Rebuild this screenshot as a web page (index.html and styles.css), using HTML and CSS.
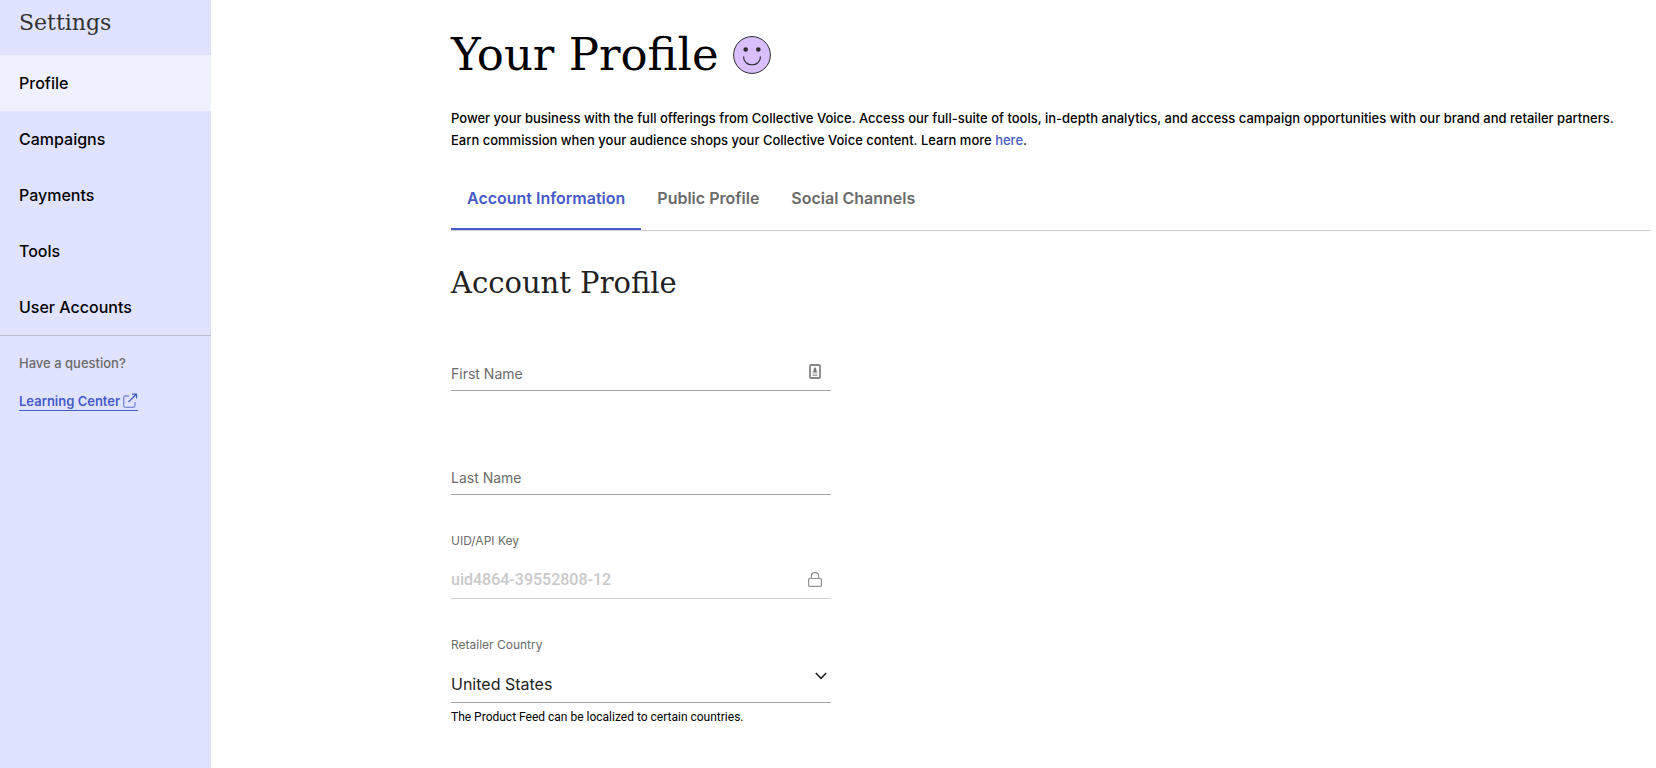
FILE: index.html
```html
<!DOCTYPE html>
<html lang="en">
<head>
<meta charset="utf-8">
<title>Your Profile</title>
<link rel="stylesheet" href="styles.css">
</head>
<body>
<div class="layout">
  <aside class="sidebar">
    <h2 class="sidebar-title">Settings</h2>
    <nav class="side-nav">
      <a class="side-link active" href="#profile">Profile</a>
      <a class="side-link" href="#campaigns">Campaigns</a>
      <a class="side-link" href="#payments">Payments</a>
      <a class="side-link" href="#tools">Tools</a>
      <a class="side-link" href="#users">User Accounts</a>
    </nav>
    <div class="help">
      <p class="help-text">Have a question?</p>
      <a class="help-link" href="#learning">Learning Center<svg width="16" height="16" viewBox="0 0 16 16" fill="none" stroke="currentColor" aria-hidden="true"><path opacity=".65" stroke-width="1.3" d="M7 3H3.5A1.8 1.8 0 0 0 1.7 4.800V12.500A1.800 1.800 0 0 0 3.500 14.300H11.200A1.800 1.800 0 0 0 13 12.500V9"/><path stroke-width="1.200" d="M6.500 9 14.300 1.300M10 1.200H14.500V5.500"/></svg></a>
    </div>
  </aside>
  <main class="main">
    <header class="page-head">
      <h1 class="page-title">Your Profile</h1>
      <svg width="38" height="38" viewBox="0 0 38 38" aria-hidden="true"><circle cx="19" cy="19" r="18.400" fill="#d9bfff" stroke="#2b2b2b"/><circle cx="12.700" cy="13.500" r="2.300" fill="#2b2b2b"/><circle cx="25.300" cy="13.500" r="2.300" fill="#2b2b2b"/><path d="M10.500 20.500C10.500 31.500 27.500 31.500 27.500 20.500" fill="none" stroke="#2b2b2b" stroke-width="1.200"/></svg>
    </header>
    <p class="intro">Power your business with the full offerings from Collective Voice. Access our full-suite of tools, in-depth analytics, and access campaign opportunities with our brand and retailer partners. Earn commission when your audience shops your Collective Voice content. Learn more <a href="#more">here</a>.</p>
    <div class="tabs" role="tablist">
      <button class="tab selected" role="tab" aria-selected="true">Account Information</button>
      <button class="tab" role="tab" aria-selected="false">Public Profile</button>
      <button class="tab" role="tab" aria-selected="false">Social Channels</button>
    </div>
    <h2 class="section-title">Account Profile</h2>
    <form class="form">
      <div class="field floating">
        <input class="control" id="first" type="text">
        <label class="label" for="first">First Name</label>
        <svg class="field-icon contact" width="12" height="15" viewBox="0 0 12 15" aria-hidden="true"><rect x="1" y="1" width="10" height="13" rx="1" fill="#fff" stroke="#858585" stroke-width="1.800"/><path d="M6 3 7.300 5 7.500 7.500H8.500V8.500H3.500V7.500H4.500L4.700 5Z" fill="#777"/><path d="M3.500 10H8.500M3.500 11.500H8.500" stroke="#aaa"/></svg>
      </div>
      <div class="field floating">
        <input class="control" id="last" type="text">
        <label class="label" for="last">Last Name</label>
      </div>
      <div class="field">
        <label class="label" for="uid">UID/API Key</label>
        <input class="control" id="uid" type="text" value="uid4864-39552808-12" disabled>
        <svg class="field-icon lock" width="14" height="15" viewBox="0 0 14 15" fill="none" stroke="#929292" stroke-width="1.200" aria-hidden="true"><rect x=".6" y="6.500" width="12.800" height="7.900" rx="1"/><path d="M3.300 6.500V4C3.300-.5 10.700-.5 10.700 4V6.500"/></svg>
      </div>
      <div class="field">
        <label class="label" for="country">Retailer Country</label>
        <select class="control" id="country"><option>United States</option></select>
        <svg class="field-icon chevron" width="12" height="8" viewBox="0 0 12 8" fill="none" stroke="#222" stroke-width="1.600" aria-hidden="true"><path d="M.8 1 6 6.300 11.200 1"/></svg>
      </div>
      <p class="hint">The Product Feed can be localized to certain countries.</p>
    </form>
  </main>
</div>
</body>
</html>
```
FILE: styles.css
```css
* { box-sizing: border-box; margin: 0; }
body { font-family: Inter, "Liberation Sans", sans-serif; font-size: 14px; color: #000; background: #fff; }
.layout { display: flex; min-height: 100vh; }
.sidebar { flex: 0 0 211px; background: #dfe3ff; }
.sidebar-title, .page-title, .section-title { font-family: "DejaVu Serif", serif; font-weight: 400; }
.sidebar-title { padding: 7px 19px 16px; font-size: 22px; line-height: 32px; color: #333; }
.side-nav { border-bottom: 1px solid #b9bccb; }
.side-link { display: block; padding: 0 19px; font-size: 16px; line-height: 56px; font-weight: 500; color: #000; text-decoration: none; }
.side-link.active { background: #eff1ff; }
.help { padding: 17px 19px; font-size: 13px; }
.help-text { font-weight: 500; line-height: 20px; color: #6b6b6b; margin-bottom: 19px; }
.help-link { display: inline-flex; align-items: center; gap: 2px; line-height: 18px; font-weight: 600; color: #465ac8; text-decoration: none; border-bottom: 1px solid #465ac8; }
.main { flex: 1; padding: 24px 5px 40px 240px; }
.page-head { display: flex; align-items: center; gap: 14px; height: 62px; }
.page-title { font-size: 45px; line-height: 62px; }
.intro { margin-top: 21px; padding-right: 16px; font-size: 13px; font-weight: 500; line-height: 22px; }
.intro a { color: #465ac8; text-decoration: none; }
.tabs { display: flex; height: 64px; margin-top: 16px; border-bottom: 1px solid #cfcfcf; }
.tab { padding: 0 16px; border: 0; border-bottom: 2px solid transparent; background: none; font: 600 16px/20px Inter, "Liberation Sans", sans-serif; color: #6b6b6b; }
.tab.selected { color: #465ac8; border-color: #465ac8; }
.section-title { margin-top: 32px; font-size: 29px; line-height: 40px; color: #222; }
.form { max-width: 380px; }
.field { position: relative; display: flex; flex-direction: column; padding-top: 38px; }
.field:first-child { margin-top: -16px; }
.label { font-size: 12px; line-height: 16px; color: #6b6b6b; }
.floating { padding-top: 54px; }
.floating .label { position: absolute; left: 0; bottom: 9px; font-size: 14px; }
.control { width: 100%; height: 50px; padding: 11px 0 0; border: 0; border-bottom: 1px solid #a3a3a3; border-radius: 0; background: none; appearance: none; font: 400 16px/24px Inter, "Liberation Sans", sans-serif; color: #222; }
select.control { padding-top: 12px; }
.control:disabled { font-family: Roboto, sans-serif; font-weight: 500; color: #c9c9c9; border-color: #d0d0d0; }
.field-icon { position: absolute; }
.contact { right: 10px; bottom: 12px; }
.lock { right: 9px; bottom: 12px; }
.chevron { right: 4px; bottom: 23px; }
.hint { margin-top: 6px; font-family: Roboto, sans-serif; font-size: 12px; line-height: 16px; }
```
